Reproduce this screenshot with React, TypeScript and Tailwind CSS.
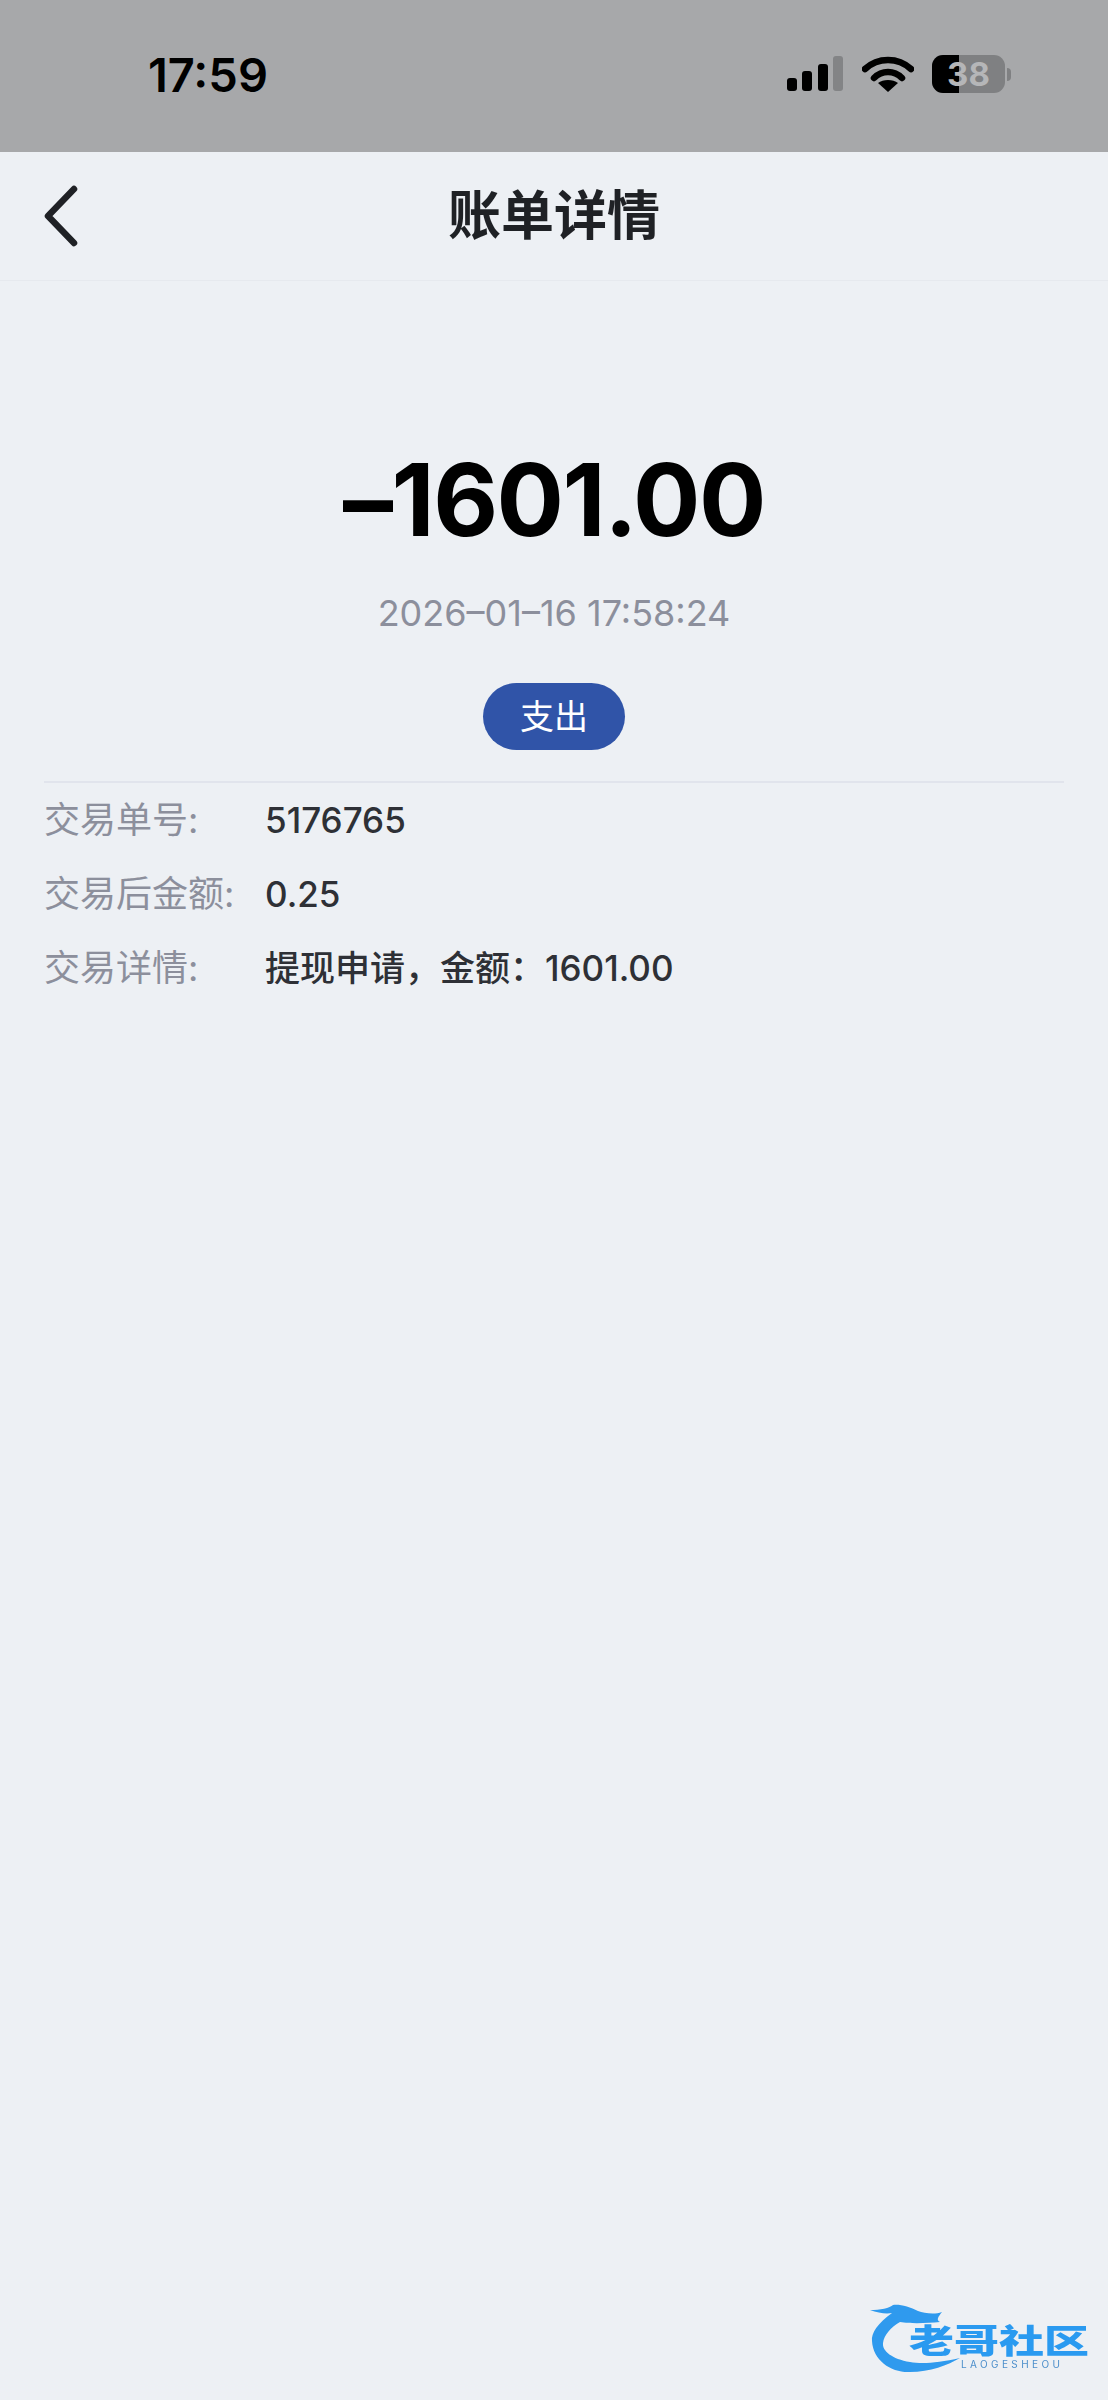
import { FC } from "react";

const CJK = "font-['Inter','Noto_Sans_CJK_SC',sans-serif]";

const rows = [
  { label: "交易单号:", value: "5176765" },
  { label: "交易后金额:", value: "0.25" },
  { label: "交易详情:", value: "提现申请，金额：1601.00" },
];

const StatusIcons: FC = () => (
  <div className="flex items-center">
    <svg width="56" height="36" viewBox="0 0 56 36">
      <rect x="0" y="22" width="10" height="13" rx="3" fill="#000" />
      <rect x="15" y="15" width="10" height="20" rx="3" fill="#000" />
      <rect x="31" y="8" width="10" height="27" rx="3" fill="#000" />
      <rect x="46" y="0" width="10" height="35" rx="3" fill="#838486" />
    </svg>
    <svg className="ml-[19px]" width="52" height="38" viewBox="0 0 52 38">
      <path d="M3 14 C16 2 36 2 49 14" fill="none" stroke="#000" strokeWidth="6.5" strokeLinecap="round" />
      <path d="M12 23 C20 15 32 15 40 23" fill="none" stroke="#000" strokeWidth="6.5" strokeLinecap="round" />
      <path d="M26 37 L16 28 C21 24 31 24 36 28 Z" fill="#000" />
    </svg>
    <div className="relative ml-[18px] flex h-[38px] w-[73px] rounded-[11px] bg-[#7f8082]">
      <div className="h-full w-[27px] rounded-l-[11px] bg-black" />
      <span className="absolute inset-0 flex items-center justify-center font-['Inter'] text-[33px] font-bold leading-none text-[#b5b6b8]">
        38
      </span>
    </div>
    <div className="ml-[2px] h-[13px] w-[4px] rounded-r-full bg-[#7f8082]" />
  </div>
);

const Logo: FC = () => (
  <div className="absolute left-[868px] top-[2303px] h-[76px] w-[225px] blur-[0.6px]">
    <svg className="absolute left-0 top-0" width="96" height="72" viewBox="0 0 96 72">
      <path
        d="M2 7 C10 10 18 11 24 10 C10 20 3 30 4 38 C5 58 24 70 42 69 C62 69 80 62 92 55 C70 60 54 61 42 59 C24 56 14 48 15 40 C16 32 23 24 32 19 C44 21 60 20 72 19 C68 17 70 14 74 9 C66 12 56 10 50 8 C42 4 32 1 25 2 C22 5 12 7 2 7 Z"
        fill="#2f9aee"
      />
    </svg>
    <span className="absolute left-[41px] top-[18px] origin-top scale-y-[0.74] whitespace-nowrap font-['Noto_Sans_CJK_SC',sans-serif] text-[45px] font-black leading-[48px] text-[#2a9af0]">
      老哥社区
    </span>
    <span className="absolute left-[93px] top-[56px] whitespace-nowrap font-['Inter',sans-serif] text-[10px] leading-[10px] tracking-[3.4px] text-[#4d8fcb]">
      LAOGESHEOU
    </span>
  </div>
);

const App: FC = () => {
  return (
    <div className={`relative flex h-[2400px] w-[1108px] flex-col overflow-hidden bg-[#edf0f4] ${CJK}`}>
      <div className="flex h-[152px] items-start justify-between bg-[#a7a8aa] pl-[148px] pr-[97px] pt-[47px]">
        <span className="font-['Inter'] text-[47px] font-semibold leading-[56px] text-black">17:59</span>
        <div className="pt-[8px]">
          <StatusIcons />
        </div>
      </div>

      <div className="relative flex h-[129px] items-center justify-center border-b border-[#e6e9ee]">
        <svg className="absolute left-[42px] top-[33px]" width="38" height="62" viewBox="0 0 38 62">
          <path d="M32 4 L6 31 L32 58" fill="none" stroke="#1f2125" strokeWidth="6.5" strokeLinecap="round" strokeLinejoin="round" />
        </svg>
        <span className="text-[53px] font-bold leading-[60px] text-[#1f2125]">账单详情</span>
      </div>

      <div className="flex flex-col items-center pt-[156px]">
        <span className="font-['Inter'] text-[100px] font-bold leading-[126px] tracking-[-1.5px] text-black">–1601.00</span>
        <span className="mt-[28px] font-['Inter'] text-[36px] leading-[44px] text-[#8c8f9c]">2026–01–16 17:58:24</span>
        <div className="mt-[48px] flex h-[67px] w-[142px] items-center justify-center rounded-full bg-[#3054a8] text-[34px] leading-none text-white">
          支出
        </div>
      </div>

      <div className="mx-[44px] mt-[31px] border-t-2 border-[#e1e4ec]">
        {rows.map((row) => (
          <div key={row.label} className="flex h-[74px] items-center text-[35px] leading-[44px]">
            <span className="w-[221px] shrink-0 text-[36px] text-[#8c8f9c]">{row.label}</span>
            <span className="font-medium text-[#2e3036]">{row.value}</span>
          </div>
        ))}
      </div>

      <Logo />
    </div>
  );
};

export default App;
